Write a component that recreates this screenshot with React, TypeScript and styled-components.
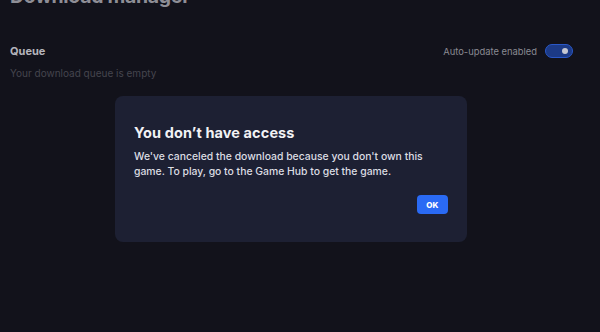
import React from "react";
import styled, {createGlobalStyle} from "styled-components";

const GlobalStyle = createGlobalStyle`
    html, body {
        margin: 0;
        padding: 0;
        background: #12121b;
        font-family: "Inter", "Noto Sans", sans-serif;
    }
`;

const Page = styled.div`
    position: relative;
    width: 600px;
    height: 332px;
    overflow: hidden;
    background: #12121b;
`;

const Content = styled.div`
    display: flex;
    flex-direction: column;
    padding: 0 27px 0 10px;
    margin-top: -16px;
`;

const PageTitle = styled.h1`
    margin: 0;
    font-size: 19.5px;
    font-weight: 700;
    line-height: 24px;
    color: #8e8e96;
    letter-spacing: -0.3px;
`;

const SectionHeader = styled.div`
    display: flex;
    align-items: center;
    justify-content: space-between;
    margin-top: 35px;
    height: 16px;
`;

const SectionTitle = styled.div`
    font-size: 11px;
    font-weight: 700;
    color: #b4b4bb;
`;

const AutoUpdate = styled.label`
    display: flex;
    align-items: center;
    gap: 8px;
    font-size: 9.4px;
    color: #8a8a92;
`;

const Toggle = styled.span<{ $on: boolean }>`
    position: relative;
    width: 28px;
    height: 14px;
    border-radius: 7px;
    box-sizing: border-box;
    background: ${p => (p.$on ? "#1c3a86" : "#33343f")};
    border: 1px solid ${p => (p.$on ? "#2a58c8" : "#44454f")};

    &::after {
        content: "";
        position: absolute;
        top: 3px;
        left: ${p => (p.$on ? "16px" : "3px")};
        width: 6px;
        height: 6px;
        border-radius: 50%;
        background: #c6c8d2;
    }
`;

const EmptyText = styled.div`
    margin-top: 8px;
    font-size: 10px;
    color: #45454e;
`;

const Overlay = styled.div`
    position: absolute;
    inset: 0;
    display: flex;
    align-items: flex-start;
    justify-content: flex-start;
    padding: 96px 0 0 115px;
`;

const Modal = styled.div`
    width: 352px;
    height: 146px;
    box-sizing: border-box;
    padding: 27px 19px 0 19px;
    background: #1d2033;
    border-radius: 8px;
    display: flex;
    flex-direction: column;
`;

const ModalTitle = styled.h2`
    margin: 0;
    font-size: 14.5px;
    font-weight: 700;
    color: #f2f2f5;
    line-height: 20px;
    letter-spacing: 0.1px;
`;

const ModalBody = styled.p`
    margin: 6px 0 0 0;
    font-size: 10.4px;
    font-weight: 500;
    line-height: 15px;
    color: #dcdde3;
`;

const Actions = styled.div`
    display: flex;
    justify-content: flex-end;
    margin-top: 16px;
`;

const Button = styled.button`
    width: 31px;
    height: 19px;
    border: none;
    border-radius: 4px;
    background: #2a6af4;
    color: #ffffff;
    font-family: inherit;
    font-size: 8px;
    font-weight: 800;
    letter-spacing: 0.3px;
    padding: 0;
    cursor: pointer;
`;

const App = () => {
    return (
        <Page>
            <GlobalStyle/>
            <Content>
                <PageTitle>Download manager</PageTitle>
                <SectionHeader>
                    <SectionTitle>Queue</SectionTitle>
                    <AutoUpdate>
                        Auto-update enabled
                        <Toggle $on={true}/>
                    </AutoUpdate>
                </SectionHeader>
                <EmptyText>Your download queue is empty</EmptyText>
            </Content>

            <Overlay>
                <Modal>
                    <ModalTitle>You don’t have access</ModalTitle>
                    <ModalBody>
                        We've canceled the download because you don't own this game. To play, go to the Game Hub to get the game.
                    </ModalBody>
                    <Actions>
                        <Button>OK</Button>
                    </Actions>
                </Modal>
            </Overlay>
        </Page>
    );
};

export default App;
